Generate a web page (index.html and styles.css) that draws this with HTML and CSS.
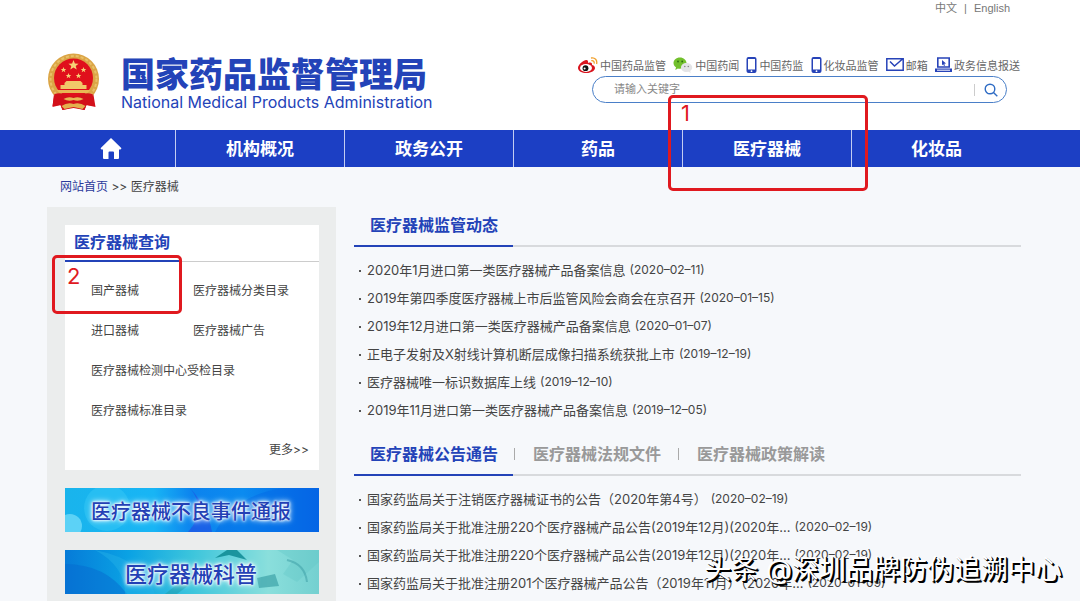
FILE: index.html
```html
<!DOCTYPE html>
<html lang="zh-CN">
<head>
  <meta charset="UTF-8" />
  <meta name="viewport" content="width=device-width, initial-scale=1.0"/>
  <title>国家药品监督管理局 - 医疗器械</title>
  <link rel="stylesheet" href="styles.css">
</head>
<body>

  <header class="header">
    <div class="lang"><a href="#">中文</a><span>|</span><a href="#">English</a></div>
    <div class="header-row">
      <a class="brand" href="#">
        <svg class="emblem" viewBox="0 0 52 58" aria-hidden="true">
          <path d="M7 36 L5 54 L13 52 L15 57 L26 54 L37 57 L39 52 L48 54 L45 36 Z" fill="#d3101a"/>
          <circle cx="26" cy="26" r="25.5" fill="#dba546"/>
          <circle cx="26" cy="26" r="23" fill="none" stroke="#e9c067" stroke-width="2" stroke-dasharray="3 2"/>
          <circle cx="26" cy="25" r="19.5" fill="#e0101c"/>
          <path d="M26 7l1.4 3.5 3.7.2-2.9 2.3 1 3.6-3.2-2-3.2 2 1-3.6-2.9-2.3 3.7-.2z" fill="#f6d276"/>
          <g fill="#f6d276">
            <path id="s" d="M16 14l.8 1.9 2 .1-1.6 1.2.6 2-1.8-1.1-1.8 1.1.6-2-1.6-1.2 2-.1z"/>
            <use href="#s" x="20"/>
            <use href="#s" x="5" y="6"/>
            <use href="#s" x="15" y="6"/>
          </g>
          <path d="M19 28h14l2 2v2h4v4H13v-4h4v-2z" fill="#f1c869"/>
          <path d="M9 37h34l-3 3H12z" fill="#e8b754"/>
          <path d="M7 41q6-2 12 1 7 3 14 0 6-3 12-1l2 12-8-1-2 5-11-2-11 2-2-5-8 1z" fill="#d3101a"/>
          <path d="M14 53q6-4 12-2 6-2 12 2l-3 3-9-2-9 2z" fill="#e3b04e"/>
          <path d="M16 46q5-3 10-1 5-2 10 1-5 3-10 1-5 2-10-1z" fill="#e8b754"/>
        </svg>
        <span class="brand-text">
          <span class="brand-cn">国家药品监督管理局</span>
          <span class="brand-en">National Medical Products Administration</span>
        </span>
      </a>

      <div class="tools">
        <div class="quick-links">
          <a href="#">
            <svg width="20" height="16" viewBox="0 0 20 16" aria-hidden="true">
              <path d="M8 3C4 4 0 8 0 11c0 3 4 5 8.500 5 5 0 8.500-2.500 8.500-5 0-2-2-2.700-3-3 .5-2-1-3-4-2 .4-2-.4-3.300-2-3z" fill="#d9141e"/>
              <ellipse cx="8" cy="11" rx="6" ry="3.900" fill="#fff"/>
              <circle cx="7.500" cy="11.200" r="2.900" fill="#111"/>
              <circle cx="6.600" cy="11.500" r="1" fill="#fff"/>
              <path d="M13 1c4-.8 6.500 2 5.600 6M13.300 3.700c2-.4 3.300 1 2.800 3" fill="none" stroke="#f0a02c" stroke-width="1.300"/>
            </svg>中国药品监管</a>
          <a href="#">
            <svg width="20" height="16" viewBox="0 0 20 16" aria-hidden="true">
              <path d="M7 .5C3 .5.5 3 .5 6c0 2 1 3.300 2.500 4.300L2.300 13l2.600-1.600c4 1 8.600-1.400 8.600-5.400 0-3-3-5.500-6.500-5.500z" fill="#72c02c"/>
              <circle cx="5" cy="4.500" r=".9" fill="#2c6b12"/><circle cx="9.200" cy="4.500" r=".9" fill="#2c6b12"/>
              <path d="M13.500 6c-3.200 0-5.500 2-5.500 4.500S10.300 15 13.500 15l2.200-.3 2 1.200-.5-1.900c1.200-.8 2-2 2-3.500C19.200 8 16.700 6 13.500 6z" fill="#e4e4e6"/>
              <circle cx="11.800" cy="9.500" r=".8" fill="#888"/><circle cx="15.300" cy="9.500" r=".8" fill="#888"/>
            </svg>中国药闻</a>
          <a href="#">
            <svg width="11" height="16" viewBox="0 0 11 16" aria-hidden="true">
              <path d="M2.500 0h6A2 2 0 0 1 10.500 2v12a2 2 0 0 1-2 2h-6a2 2 0 0 1-2-2V2a2 2 0 0 1 2-2zM2 2v10.500h7V2z" fill="#2743b8" fill-rule="evenodd"/>
              <circle cx="5.500" cy="14.200" r=".9" fill="#fff"/>
            </svg>中国药监</a>
          <a href="#">
            <svg width="11" height="16" viewBox="0 0 11 16" aria-hidden="true">
              <path d="M2.500 0h6A2 2 0 0 1 10.500 2v12a2 2 0 0 1-2 2h-6a2 2 0 0 1-2-2V2a2 2 0 0 1 2-2zM2 2v10.500h7V2z" fill="#2743b8" fill-rule="evenodd"/>
              <circle cx="5.500" cy="14.200" r=".9" fill="#fff"/>
            </svg>化妆品监管</a>
          <a href="#">
            <svg width="18" height="13" viewBox="0 0 18 13" fill="none" stroke="#2743b8" stroke-width="1.500" aria-hidden="true">
              <path d="M.8.8h16.400v11.400H.8zM4 3.500l4.500 4.500L16.500 1"/>
            </svg>邮箱</a>
          <a href="#">
            <svg width="17" height="15" viewBox="0 0 17 15" aria-hidden="true">
              <path d="M2.800 1h11.400v9H2.800z" fill="none" stroke="#2743b8" stroke-width="1.600"/>
              <path d="M7 3l4 3.500-1.800.3L10 8.500l-1 .4-.8-1.700L7 8.200zM0 11.500h17V15H0z" fill="#2743b8"/>
              <path d="M2 13.200h13" stroke="#fff"/>
            </svg>政务信息报送</a>
        </div>
        <form class="search">
          <input type="text" placeholder="请输入关键字" aria-label="请输入关键字">
          <button type="button" aria-label="搜索">
            <svg width="14" height="14" viewBox="0 0 14 14" fill="none" stroke="#2f6cc4" stroke-width="1.400" aria-hidden="true">
              <circle cx="6" cy="6" r="4.800"/><path d="M9.500 9.500L13.300 13.300"/>
            </svg>
          </button>
        </form>
      </div>
    </div>
  </header>

  <nav class="nav">
    <a href="#" aria-label="首页">
      <svg width="22" height="21" viewBox="0 0 22 21" aria-hidden="true">
        <path d="M11 0l10.500 10.200-1 1.300H19V20a1 1 0 0 1-1 1h-4v-6.500a1 1 0 0 0-1-1H9.500a1 1 0 0 0-1 1V21H4a1 1 0 0 1-1-1v-8.500H1.500l-1-1.300z" fill="#fff"/>
      </svg>
    </a>
    <a href="#">机构概况</a>
    <a href="#">政务公开</a>
    <a href="#">药品</a>
    <a href="#">医疗器械<span class="mark mark-nav">1</span></a>
    <a href="#">化妆品</a>
  </nav>

  <div class="crumb"><a href="#">网站首页</a> &gt;&gt; 医疗器械</div>

  <div class="content">
    <aside class="sidebar">
      <section class="query">
        <h2><span>医疗器械查询</span></h2>
        <ul>
          <li><a href="#">国产器械</a><span class="mark mark-side">2</span></li>
          <li><a href="#">医疗器械分类目录</a></li>
          <li><a href="#">进口器械</a></li>
          <li><a href="#">医疗器械广告</a></li>
          <li class="wide"><a href="#">医疗器械检测中心受检目录</a></li>
          <li class="wide"><a href="#">医疗器械标准目录</a></li>
        </ul>
        <a class="more" href="#">更多&gt;&gt;</a>
      </section>

      <a class="banner banner-report" href="#">
        <svg viewBox="0 0 254 44" preserveAspectRatio="none" aria-hidden="true">
          <circle cx="42" cy="20" r="23" fill="#35c8f5" opacity=".5"/>
          <circle cx="5" cy="38" r="12" fill="#9ff0ff" opacity=".5"/>
          <path d="M125 0q18 20 22 44h-24q20-22 2-44z" fill="#273ee0" opacity=".5"/>
          <path d="M150 44q20-38 70-44h34v44z" fill="#0369e6" opacity=".5"/>
        </svg>
        <span>医疗器械不良事件通报</span>
      </a>
      <a class="banner banner-science" href="#">
        <svg viewBox="0 0 254 44" preserveAspectRatio="none" aria-hidden="true">
          <path d="M0 14q40 0 62 30H0z" fill="#0669cf" opacity=".5"/>
          <path d="M30 0q50 10 60 44h-30Q60 16 30 0z" fill="#28b4e8" opacity=".4"/>
          <path d="M150 8l12-8h10l10 10-18-5z" fill="#07858f" opacity=".8"/>
          <path d="M100 44l28-22 8 4-24 18z" fill="#1c9aa8" opacity=".5"/>
          <path d="M192 28l18-4 4 12-20 2z" fill="#3da2a8" opacity=".7"/>
          <path d="M212 0l16 10-10 14 14 8 22-20V0z" fill="#5cc2c4" opacity=".3"/>
          <path d="M222 10q18 4 20 22" fill="none" stroke="#3a9ba4" stroke-width="2" opacity=".5"/>
        </svg>
        <span>医疗器械科普</span>
      </a>
    </aside>

    <main class="main">
      <section>
        <div class="tabs"><h2 class="active"><a href="#">医疗器械监管动态</a></h2></div>
        <ul class="news">
          <li><a href="#">2020年1月进口第一类医疗器械产品备案信息</a> <time>(2020–02–11)</time></li>
          <li><a href="#">2019年第四季度医疗器械上市后监管风险会商会在京召开</a> <time>(2020–01–15)</time></li>
          <li><a href="#">2019年12月进口第一类医疗器械产品备案信息</a> <time>(2020–01–07)</time></li>
          <li><a href="#">正电子发射及X射线计算机断层成像扫描系统获批上市</a> <time>(2019–12–19)</time></li>
          <li><a href="#">医疗器械唯一标识数据库上线</a> <time>(2019–12–10)</time></li>
          <li><a href="#">2019年11月进口第一类医疗器械产品备案信息</a> <time>(2019–12–05)</time></li>
        </ul>
      </section>
      <section>
        <div class="tabs">
          <h2 class="active"><a href="#">医疗器械公告通告</a></h2>
          <h2><a href="#">医疗器械法规文件</a></h2>
          <h2><a href="#">医疗器械政策解读</a></h2>
        </div>
        <ul class="news">
          <li><a href="#">国家药监局关于注销医疗器械证书的公告（2020年第4号）</a> <time>(2020–02–19)</time></li>
          <li><a href="#">国家药监局关于批准注册220个医疗器械产品公告(2019年12月)(2020年...</a> <time>(2020–02–19)</time></li>
          <li><a href="#">国家药监局关于批准注册220个医疗器械产品公告(2019年12月)(2020年...</a> <time>(2020–02–19)</time></li>
          <li><a href="#">国家药监局关于批准注册201个医疗器械产品公告（2019年11月）（2020年...</a> <time>(2020–01–09)</time></li>
        </ul>
      </section>
    </main>
  </div>

  <div class="watermark">头条 @深圳品牌防伪追溯中心</div>

</body>
</html>
```
FILE: styles.css
```css
* {
  box-sizing: border-box;
}
body {
  display: flex;
  flex-direction: column;
  position: relative;
  min-height: 100vh;
  margin: 0;
  background: #f6f8fb;
  color: #444;
  font-family: Inter, "Noto Sans CJK SC", sans-serif;
  font-size: 12px;
}
a {
  color: inherit;
  text-decoration: none;
}
h2, ul {
  margin: 0;
  padding: 0;
}
h2 {
  font-size: 16px;
  line-height: 24px;
}
ul {
  list-style: none;
}

/* Header */
.header {
  height: 130px;
  padding: 0 60px 0 47px;
  background: #fff;
}
.lang {
  display: flex;
  justify-content: flex-end;
  gap: 7px;
  padding-right: 10px;
  color: #777;
  font-family: "Liberation Sans", "Noto Sans CJK SC", sans-serif;
  font-size: 11px;
  line-height: 16px;
}
.header-row {
  display: flex;
  justify-content: space-between;
  padding-top: 37px;
}
.brand {
  display: flex;
  gap: 21px;
  color: #2343b8;
}
.emblem {
  width: 53px;
  height: 58px;
}
.brand-text {
  display: flex;
  flex-direction: column;
}
.brand-cn {
  font-size: 34px;
  font-weight: 900;
  line-height: 44px;
}
.brand-en {
  font-size: 16px;
  line-height: 10px;
}

/* Quick links and search */
.tools {
  width: 442px;
}
.quick-links {
  display: flex;
  justify-content: space-between;
  height: 23px;
  color: #666;
  font-size: 11px;
}
.quick-links a {
  display: flex;
  align-items: center;
  gap: 2px;
  white-space: nowrap;
}
.search {
  display: flex;
  align-items: center;
  height: 27px;
  margin: 0 13px 0 14px;
  border: 1px solid #4a7fc8;
  border-radius: 14px;
  overflow: hidden;
}
.search input {
  flex: 1;
  min-width: 0;
  padding: 0 0 2px 21px;
  border: 0;
  outline: 0;
  background: none;
  font: inherit;
  font-size: 11px;
}
.search input::placeholder {
  color: #888;
}
.search button {
  display: flex;
  align-items: center;
  justify-content: center;
  width: 32px;
  height: 12px;
  padding: 0;
  border: 0;
  border-left: 1px solid #ccc;
  background: none;
}

/* Main navigation */
.nav {
  display: grid;
  grid-template-columns: 130fr repeat(5, 169fr);
  height: 37px;
  padding: 0 59px 0 46px;
  background: #1c3fc4;
  color: #fff;
  font-size: 17px;
  font-weight: bold;
}
.nav a {
  display: flex;
  align-items: center;
  justify-content: center;
  position: relative;
  padding-bottom: 2px;
}
.nav a:first-child {
  padding-bottom: 0;
}
.nav a:not(:last-child) {
  border-right: 1px solid #c3cdf2;
}

/* Numbered red frames */
.mark {
  position: absolute;
  border: 3px solid #e0191f;
  border-radius: 5px;
  color: #e0191f;
  font-size: 22px;
  font-weight: normal;
  line-height: 26px;
  padding: 2px 10px;
  pointer-events: none;
  z-index: 2;
}
.mark-nav {
  top: -35px;
  right: -17px;
  bottom: -24px;
  left: -15px;
}
.mark-side {
  top: -16px;
  right: 11px;
  bottom: -3px;
  left: -39px;
  padding: 5px 12px;
}

.crumb {
  padding: 0 60px;
  line-height: 40px;
}
.crumb a {
  color: #2a3a9c;
}

/* Content */
.content {
  display: grid;
  grid-template-columns: 289fr 667fr;
  gap: 18px;
  flex: 1;
  padding: 0 59px 0 47px;
}
.sidebar {
  display: flex;
  flex-direction: column;
  gap: 18px;
  padding: 18px 17px 6px 18px;
  background: #ebeded;
}
.query {
  height: 245px;
  background: #fff;
}
.query h2 {
  display: flex;
  height: 37px;
  border-bottom: 1px solid #ccc;
  color: #2343b8;
}
.query h2 span {
  width: 116px;
  height: 37px;
  padding: 5px 0 0 9px;
  border-bottom: 2px solid #2343b8;
}
.query ul {
  display: grid;
  grid-template-columns: 102px 1fr;
  padding: 9px 0 0 26px;
}
.query li {
  position: relative;
  line-height: 40px;
}
.query .wide {
  grid-column: span 2;
}
.more {
  display: block;
  padding-right: 10px;
  line-height: 38px;
  text-align: right;
}

/* Picture banners */
.banner {
  display: flex;
  align-items: center;
  justify-content: center;
  position: relative;
  height: 44px;
  padding-right: 2px;
  color: #2340b5;
  font-weight: 500;
  text-shadow: 0 0 2px #fff, 0 0 3px #fff, 0 0 5px #fff, 0 0 7px #cff4ff;
}
.banner svg {
  position: absolute;
  top: 0;
  left: 0;
  width: 100%;
  height: 100%;
}
.banner span {
  position: relative;
}
.banner-report {
  background: linear-gradient(90deg, #19b4ec, #18b5f5 35%, #0c83ee 50%, #0b8bf0 70%, #0560e4);
  font-size: 20px;
}
.banner-science {
  background: linear-gradient(90deg, #067bd8, #0aa2e4 25%, #3cc5dc 50%, #8adfdc 80%, #74d0d0);
  font-size: 22px;
}

/* News lists */
.main {
  min-width: 0;
}
.tabs {
  display: flex;
  height: 40px;
  border-bottom: 2px solid #d8dadd;
}
.tabs h2 {
  position: relative;
  height: 40px;
  padding: 6px 20px 0 16px;
  color: #999;
}
.tabs h2.active {
  border-bottom: 2px solid #2343b8;
  color: #2343b8;
  padding-right: 15px;
}
.tabs h2 + h2 {
  padding: 6px 16px 0 20px;
}
.tabs h2 + h2::before {
  content: "";
  position: absolute;
  top: 12px;
  left: 1px;
  width: 1px;
  height: 12px;
  background: #aaa;
}
.news {
  padding: 8px 0 13px 13px;
  font-size: 13px;
}
.news li {
  display: flex;
  align-items: center;
  gap: 4px;
  position: relative;
  height: 28px;
  white-space: nowrap;
}
.news li::before {
  content: "";
  position: absolute;
  top: 15px;
  left: -8px;
  width: 2px;
  height: 2px;
  background: #555;
}
.news time {
  font-size: 12px;
}
section:last-child .news {
  padding-bottom: 0;
}

.watermark {
  position: absolute;
  right: 18px;
  bottom: 11px;
  color: #fff;
  font-size: 27px;
  line-height: 40px;
  text-shadow: 1px 1px 0 #000, 2px 2px 0 #000;
  white-space: nowrap;
}
```
